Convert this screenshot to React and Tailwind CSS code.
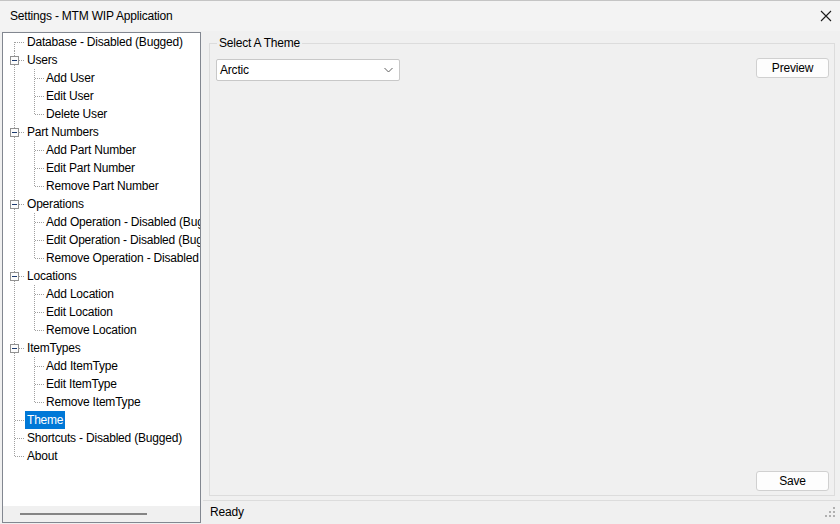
import React from "react";

const font = { fontFamily: '"Liberation Sans", Arial, sans-serif' };

const tree = [
  { label: "Database - Disabled (Bugged)" },
  { label: "Users", children: ["Add User", "Edit User", "Delete User"] },
  { label: "Part Numbers", children: ["Add Part Number", "Edit Part Number", "Remove Part Number"] },
  {
    label: "Operations",
    children: [
      "Add Operation - Disabled (Bugged)",
      "Edit Operation - Disabled (Bugged)",
      "Remove Operation - Disabled (Bugged)",
    ],
  },
  { label: "Locations", children: ["Add Location", "Edit Location", "Remove Location"] },
  { label: "ItemTypes", children: ["Add ItemType", "Edit ItemType", "Remove ItemType"] },
  { label: "Theme", selected: true },
  { label: "Shortcuts - Disabled (Bugged)" },
  { label: "About" },
];

const DOT = "#a0a0a0";

// tree connector lines for a top level node
const RootLines = ({ first, last, expandable }) => (
  <svg width="22" height="18" className="shrink-0">
    <line x1="11.5" y1={first ? 9 : 0} x2="11.5" y2={last ? 10 : 18} stroke={DOT} strokeDasharray="1 1" />
    <line x1={expandable ? 16 : 12} y1="9.5" x2="22" y2="9.5" stroke={DOT} strokeDasharray="1 1" />
    {expandable && (
      <>
        <rect x="7.5" y="5.5" width="8" height="8" fill="#fcfcfc" stroke="#919191" />
        <line x1="9" y1="9.5" x2="14" y2="9.5" stroke="#1c3a6e" />
      </>
    )}
  </svg>
);

// connector lines for a child node
const ChildLines = ({ last }) => (
  <svg width="41" height="18" className="shrink-0">
    <line x1="11.5" y1="0" x2="11.5" y2="18" stroke={DOT} strokeDasharray="1 1" />
    <line x1="31.5" y1="0" x2="31.5" y2={last ? 10 : 18} stroke={DOT} strokeDasharray="1 1" />
    <line x1="32" y1="9.5" x2="41" y2="9.5" stroke={DOT} strokeDasharray="1 1" />
  </svg>
);

const Label = ({ children, selected }) => (
  <span
    className={`px-[2px] h-[18px] leading-[18px] whitespace-nowrap ${
      selected ? "bg-[#0078d7] text-white" : "text-black"
    }`}
  >
    {children}
  </span>
);

const TreeView = () => (
  <div className="mt-[1px] ml-[2px] w-[199px] h-[491px] border border-[#828790] bg-white flex flex-col overflow-hidden">
    <div className="flex-1 flex flex-col">
      {tree.map((node, i) => (
        <React.Fragment key={node.label}>
          <div className="flex h-[18px] items-center">
            <RootLines first={i === 0} last={i === tree.length - 1} expandable={!!node.children} />
            <Label selected={node.selected}>{node.label}</Label>
          </div>
          {node.children &&
            node.children.map((c, j) => (
              <div key={c} className="flex h-[18px] items-center">
                <ChildLines last={j === node.children.length - 1} />
                <Label>{c}</Label>
              </div>
            ))}
        </React.Fragment>
      ))}
    </div>
    <div className="h-[16px] bg-[#f0f0f0] flex items-center pl-[17px]">
      <div className="w-[127px] h-[2px] bg-[#858585]" />
    </div>
  </div>
);

const Button = ({ children }) => (
  <button className="w-[73px] h-[20px] bg-[#fdfdfd] border border-[#d0d0d0] rounded-[3px] text-[12px] text-black leading-none">
    {children}
  </button>
);

export default function App() {
  return (
    <div
      className="w-[840px] h-[524px] bg-[#f0f0f0] flex flex-col overflow-hidden text-[12px] tracking-[-0.2px]"
      style={font}
    >
      {/* title bar */}
      <div className="h-[31px] bg-[#f3f3f3] flex items-center justify-between pl-[10px] pr-[8px] border-t border-[#c4c4c4]">
        <span className="text-black text-[12px]">Settings - MTM WIP Application</span>
        <svg width="12" height="12" viewBox="0 0 12 12">
          <path d="M1 1 L11 11 M11 1 L1 11" stroke="#1a1a1a" strokeWidth="1.1" />
        </svg>
      </div>

      <div className="flex flex-1">
        <TreeView />

        <div className="flex-1 ml-[2px] flex flex-col">
          {/* group box */}
          <div className="relative mt-[12px] ml-[6px] mr-[5px] h-[453px] border border-[#dcdcdc] flex flex-col">
            <span className="absolute -top-[9px] left-[7px] px-[2px] bg-[#f0f0f0] text-black leading-[16px]">
              Select A Theme
            </span>
            <div className="flex justify-between items-start mt-[14px] pl-[6px] pr-[5px]">
              <div className="mt-[1px] w-[184px] h-[22px] bg-white border border-[#c8c8c8] rounded-[2px] flex items-center justify-between pl-[3px] pr-[6px]">
                <span className="text-black">Arctic</span>
                <svg width="9" height="6" viewBox="0 0 9 6">
                  <path d="M0.5 1 L4.5 5 L8.5 1" fill="none" stroke="#606060" strokeWidth="1" />
                </svg>
              </div>
              <Button>Preview</Button>
            </div>
            <div className="flex-1" />
            <div className="flex justify-end pr-[5px] pb-[4px]">
              <Button>Save</Button>
            </div>
          </div>

          {/* status bar */}
          <div className="mt-[4px] border-t border-[#dcdcdc] flex-1 flex items-center justify-between pl-[7px] pr-[4px] pb-[1px]">
            <span className="text-black">Ready</span>
            <svg width="12" height="12" viewBox="0 0 12 12">
              <rect x="9" y="1" width="2" height="2" fill="#b0b0b0" />
              <rect x="5" y="5" width="2" height="2" fill="#b0b0b0" />
              <rect x="9" y="5" width="2" height="2" fill="#b0b0b0" />
              <rect x="1" y="9" width="2" height="2" fill="#b0b0b0" />
              <rect x="5" y="9" width="2" height="2" fill="#b0b0b0" />
              <rect x="9" y="9" width="2" height="2" fill="#b0b0b0" />
            </svg>
          </div>
        </div>
      </div>
    </div>
  );
}
